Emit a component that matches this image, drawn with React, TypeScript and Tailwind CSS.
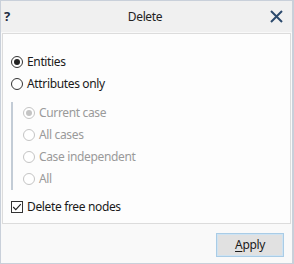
import React, { useState } from 'react';

const Radio: React.FC<{ checked: boolean; disabled?: boolean }> = ({ checked, disabled }) => (
  <span
    className={`w-[12px] h-[12px] rounded-full border flex items-center justify-center shrink-0 bg-white ${
      disabled ? 'border-[#c4c4c4]' : 'border-[#333333]'
    }`}
  >
    {checked && (
      <span className={`w-[6px] h-[6px] rounded-full ${disabled ? 'bg-[#c4c4c4]' : 'bg-[#222222]'}`}></span>
    )}
  </span>
);

export default function App() {
  const [mode, setMode] = useState<'entities' | 'attributes'>('entities');
  const [freeNodes, setFreeNodes] = useState(true);
  const subOptions = ['Current case', 'All cases', 'Case independent', 'All'];

  return (
    <div
      className="w-[294px] h-[264px] bg-[#f9f9f9] border border-r-2 border-[#c9d0da] flex flex-col text-[12px] tracking-[-0.35px] text-[#1a1a1a]"
      style={{ fontFamily: '"Segoe UI", "Noto Sans", sans-serif' }}
    >
      {/* Title bar */}
      <div className="h-[31px] bg-[#f0f0f0] flex items-center px-[3px] shrink-0">
        <span className="w-[20px] font-bold text-[13px] text-[#1e2d44]">?</span>
        <span className="flex-1 text-center text-[12px] text-[#222]">Delete</span>
        <button className="w-[20px] h-[20px] flex items-center justify-center mr-[3px]">
          <svg width="13" height="13" viewBox="0 0 13 13">
            <path d="M1 1 L12 12 M12 1 L1 12" stroke="#2c4a6d" strokeWidth="2" />
          </svg>
        </button>
      </div>

      {/* Panel */}
      <div className="mx-[1px] mt-[1px] h-[191px] bg-[#fdfdfd] border border-[#dcdcdc] px-[8px] pt-[17px] flex flex-col">
        <label className="flex items-center gap-[4px] h-[22px] cursor-default" onClick={() => setMode('entities')}>
          <Radio checked={mode === 'entities'} />
          <span>Entities</span>
        </label>
        <label className="flex items-center gap-[4px] h-[22px] cursor-default" onClick={() => setMode('attributes')}>
          <Radio checked={mode === 'attributes'} />
          <span>Attributes only</span>
        </label>

        <div className="mt-[7px] border-l-2 border-[#c3ccd6] pl-[10px] flex flex-col">
          {subOptions.map((o, i) => (
            <div key={o} className="flex items-center gap-[4px] h-[22px] text-[#9a9a9a]">
              <Radio checked={i === 0} disabled />
              <span>{o}</span>
            </div>
          ))}
        </div>

        <label className="flex items-center gap-[4px] h-[22px] mt-[6px] cursor-default" onClick={() => setFreeNodes(!freeNodes)}>
          <span className="w-[12px] h-[12px] border border-[#333] bg-white flex items-center justify-center shrink-0">
            {freeNodes && (
              <svg width="10" height="10" viewBox="0 0 10 10">
                <path d="M1.2 5 L3.8 7.6 L8.8 2.2" stroke="#222" strokeWidth="1.1" fill="none" />
              </svg>
            )}
          </span>
          <span>Delete free nodes</span>
        </label>
      </div>

      {/* Footer */}
      <div className="flex-1 flex items-start justify-end pt-[9px] pr-[8px]">
        <button className="w-[68px] h-[24px] bg-[#e1e1e1] border border-[#a9cce6] outline outline-1 outline-[#cfe3f2] -outline-offset-2 text-[12px] tracking-[-0.35px] text-[#1a1a1a]">
          <span className="underline underline-offset-2">A</span>pply
        </button>
      </div>
    </div>
  );
}
